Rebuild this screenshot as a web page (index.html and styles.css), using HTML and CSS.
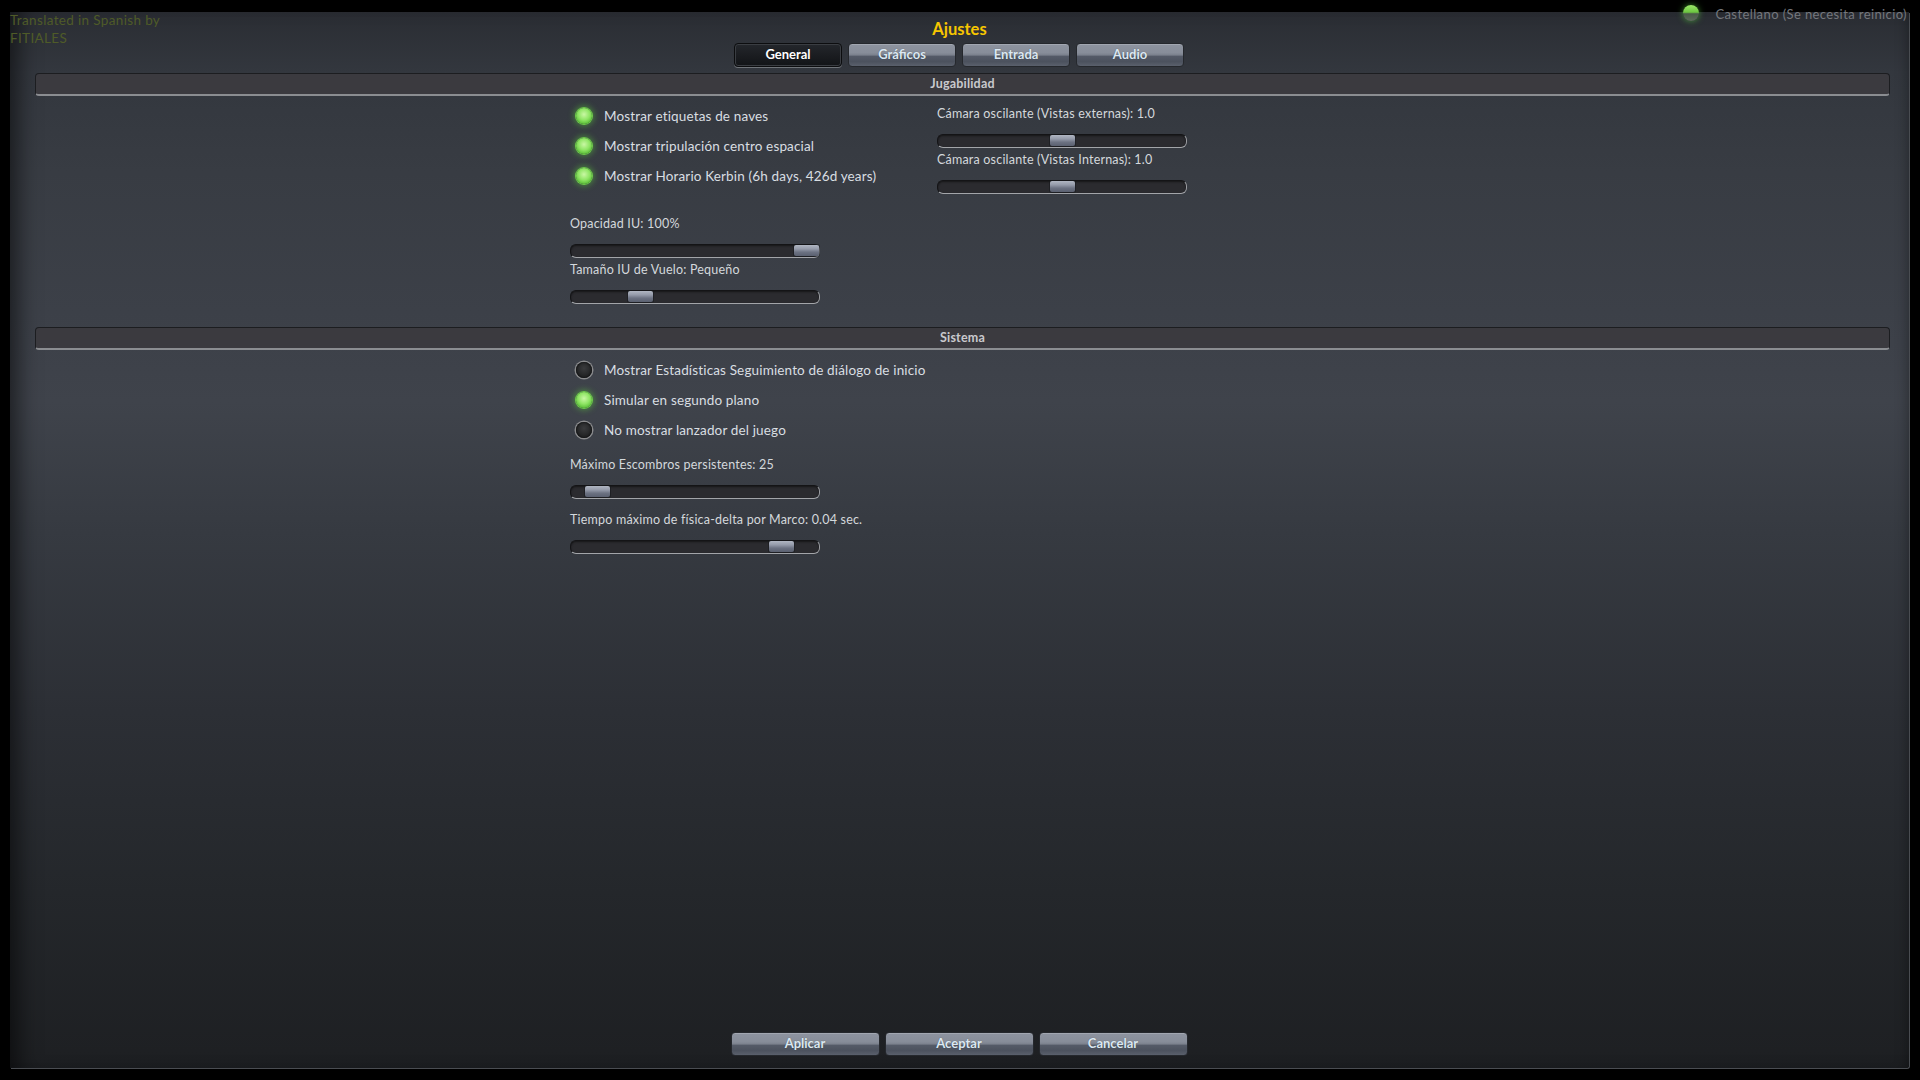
FILE: index.html
```html
<!DOCTYPE html>
<html lang="es">
<head>
<meta charset="utf-8">
<title>Ajustes</title>
<link rel="stylesheet" href="styles.css">
</head>
<body>
<div class="screen">
  <div class="panel">
    <div class="credit">Translated in Spanish by<br>FITIALES</div>
    <div class="lang"><span class="lang-dot"></span><span class="lang-text">Castellano (Se necesita reinicio)</span></div>

    <h1 class="title">Ajustes</h1>
    <nav class="tabs">
      <button class="tab active">General</button>
      <button class="tab">Gráficos</button>
      <button class="tab">Entrada</button>
      <button class="tab">Audio</button>
    </nav>

    <div class="section-bar">Jugabilidad</div>
    <div class="section gameplay">
      <div class="col col-left">
        <div class="toggle on"><span class="dot"></span><span>Mostrar etiquetas de naves</span></div>
        <div class="toggle on"><span class="dot"></span><span>Mostrar tripulación centro espacial</span></div>
        <div class="toggle on"><span class="dot"></span><span>Mostrar Horario Kerbin (6h days, 426d years)</span></div>
        <div class="sliders first-gap">
          <div class="slider">
            <div class="slider-label">Opacidad IU: 100%</div>
            <div class="track"><span class="thumb" style="left: 223px"></span></div>
          </div>
          <div class="slider">
            <div class="slider-label">Tamaño IU de Vuelo: Pequeño</div>
            <div class="track"><span class="thumb" style="left: 57px"></span></div>
          </div>
        </div>
      </div>
      <div class="col col-right">
        <div class="slider">
          <div class="slider-label">Cámara oscilante (Vistas externas): 1.0</div>
          <div class="track"><span class="thumb" style="left: 112px"></span></div>
        </div>
        <div class="slider">
          <div class="slider-label">Cámara oscilante (Vistas Internas): 1.0</div>
          <div class="track"><span class="thumb" style="left: 112px"></span></div>
        </div>
      </div>
    </div>

    <div class="section-bar">Sistema</div>
    <div class="section system">
      <div class="col col-left">
        <div class="toggle"><span class="dot"></span><span>Mostrar Estadísticas Seguimiento de diálogo de inicio</span></div>
        <div class="toggle on"><span class="dot"></span><span>Simular en segundo plano</span></div>
        <div class="toggle"><span class="dot"></span><span>No mostrar lanzador del juego</span></div>
        <div class="sliders spaced">
          <div class="slider">
            <div class="slider-label">Máximo Escombros persistentes: 25</div>
            <div class="track"><span class="thumb" style="left: 14px"></span></div>
          </div>
          <div class="slider">
            <div class="slider-label">Tiempo máximo de física-delta por Marco: 0.04 sec.</div>
            <div class="track"><span class="thumb" style="left: 198px"></span></div>
          </div>
        </div>
      </div>
    </div>

    <div class="spacer"></div>

    <div class="actions">
      <button class="btn">Aplicar</button>
      <button class="btn">Aceptar</button>
      <button class="btn">Cancelar</button>
    </div>
  </div>
</div>
</body>
</html>
```

FILE: styles.css
```css
* { box-sizing: border-box; }

html, body {
  margin: 0;
  padding: 0;
  width: 1920px;
  height: 1080px;
  background: #000;
  overflow: hidden;
}

.screen {
  width: 1920px;
  height: 1080px;
  padding: 12px 11px 12px 10px;
  font-family: Lato, "Open Sans", "Noto Sans", sans-serif;
}

.panel {
  position: relative;
  height: 100%;
  display: flex;
  flex-direction: column;
  background: linear-gradient(to bottom,
      #2a2d33 0px, #33373e 60px, #383c43 160px, #3c4048 300px,
      #3f434b 390px, #363a41 520px, #2c2f35 700px, #24272b 880px,
      #1e2023 1040px, #1c1e21 100%);
  box-shadow: inset 22px 0 22px -14px rgba(0,0,0,0.55),
              inset -10px 0 14px -10px rgba(0,0,0,0.4),
              1px 1px 0 #4a4d52;
  border-radius: 0 0 3px 0;
}

/* corner overlays */
.credit {
  position: absolute;
  left: 0;
  top: -1px;
  color: #4f5b28;
  font-size: 13.5px;
  line-height: 18px;
  letter-spacing: 0.35px;
}

.lang {
  position: absolute;
  right: 2px;
  top: -8px;
  display: flex;
  align-items: center;
  gap: 16px;
}
.lang-dot {
  width: 16px;
  height: 16px;
  border-radius: 50%;
  background: linear-gradient(to bottom, #9be86a 0%, #6cc640 45%, #4a5a48 55%, #5c6a5a 100%);
  box-shadow: 0 0 6px rgba(90, 220, 60, 0.6);
}
.lang-text {
  color: #74777d;
  font-size: 13px;
  letter-spacing: 0.4px;
  padding-top: 2px;
}

.title {
  margin: 7px 0 0;
  text-align: center;
  font-size: 16.5px;
  line-height: 20px;
  font-weight: 700;
  color: #f7c600;
}

.tabs {
  margin-top: 4px;
  display: flex;
  justify-content: center;
  gap: 6px;
  padding-right: 1px;
}

.tab, .btn {
  font-family: Lato, "Open Sans", sans-serif;
  font-weight: 700;
  font-size: 13px;
  color: #dce8f2;
  border: 1px solid #25282d;
  border-radius: 4px;
  background: linear-gradient(to bottom,
      #8e94a0 0%, #878d99 40%, #7b818d 50%, #545a67 56%, #4c525e 80%, #5a606c 100%);
  box-shadow: inset 0 1px 0 rgba(255,255,255,0.18);
  padding: 0 0 2px;
  cursor: pointer;
  text-shadow: 0 0 1px rgba(0,0,0,0.4);
}

.tab {
  width: 108px;
  height: 24px;
}

.tab.active {
  color: #ffffff;
  background: linear-gradient(to bottom, #24272c 0%, #1b1d21 50%, #121417 100%);
  border: 1px solid #0c0d0f;
  box-shadow: inset 0 0 0 1px #3a3d42, 0 1px 0 #6f7378;
}

.section-bar {
  margin: 6px 19px 0 25px;
  height: 23px;
  border-radius: 4px;
  background: #3b3a3f;
  border: 1px solid #1c1d20;
  border-bottom: 2px solid #8b8d91;
  color: #c9c9cd;
  font-weight: 700;
  font-size: 12.5px;
  line-height: 20px;
  text-align: center;
  letter-spacing: 0.2px;
}

.section {
  display: flex;
  padding-left: 560px;
}

.gameplay { margin-top: 5px; margin-bottom: 16px; }
.system { margin-top: 5px; }

.col-left { width: 367px; }
.col-right { padding-top: 2px; }

.toggle {
  height: 30px;
  display: flex;
  align-items: center;
  gap: 12px;
  padding-left: 6px;
  color: #d9dee2;
  font-size: 13.5px;
  letter-spacing: 0.15px;
  white-space: nowrap;
}

.dot {
  flex: none;
  width: 16px;
  height: 16px;
  border-radius: 50%;
  background: radial-gradient(circle at 50% 40%, #3a3b3d 0%, #242526 60%, #1a1a1b 100%);
  box-shadow: 0 0 0 1.5px #8a8b8d, inset 0 0 2px #000;
}
.toggle.on .dot {
  background: radial-gradient(circle at 50% 40%, #c9f7a4 0%, #8fe564 45%, #55bb33 80%, #3e9a26 100%);
  box-shadow: 0 0 0 1px #6dc94a, 0 0 6px 2px rgba(100, 230, 60, 0.45);
}

.sliders.first-gap { margin-top: 22px; }
.sliders.spaced { margin-top: 9px; }
.sliders.spaced .slider + .slider { margin-top: 9px; }

.slider { height: 46px; }

.slider-label {
  height: 21px;
  line-height: 21px;
  color: #d4d8dc;
  font-size: 12.5px;
  letter-spacing: 0.2px;
  white-space: nowrap;
}

.track {
  position: relative;
  margin-top: 10px;
  width: 250px;
  height: 14px;
  border-radius: 6px;
  background: #2b2b2f;
  border: 1px solid #141416;
  border-right-color: #9a9ca0;
  border-bottom-color: #a3a5a9;
  box-shadow: inset 0 1px 2px rgba(0,0,0,0.5);
}

.thumb {
  position: absolute;
  top: 0px;
  width: 25px;
  height: 11px;
  border-radius: 2px;
  background: linear-gradient(to bottom, #b0b6c2 0%, #959baa 35%, #6c7282 65%, #5a6070 100%);
  box-shadow: 0 0 0 1px rgba(20,22,26,0.5);
}

.spacer { flex: 1; }

.actions {
  display: flex;
  justify-content: center;
  gap: 5px;
  margin-bottom: 12px;
  padding-right: 1px;
}

.btn {
  width: 149px;
  height: 24px;
}
```
